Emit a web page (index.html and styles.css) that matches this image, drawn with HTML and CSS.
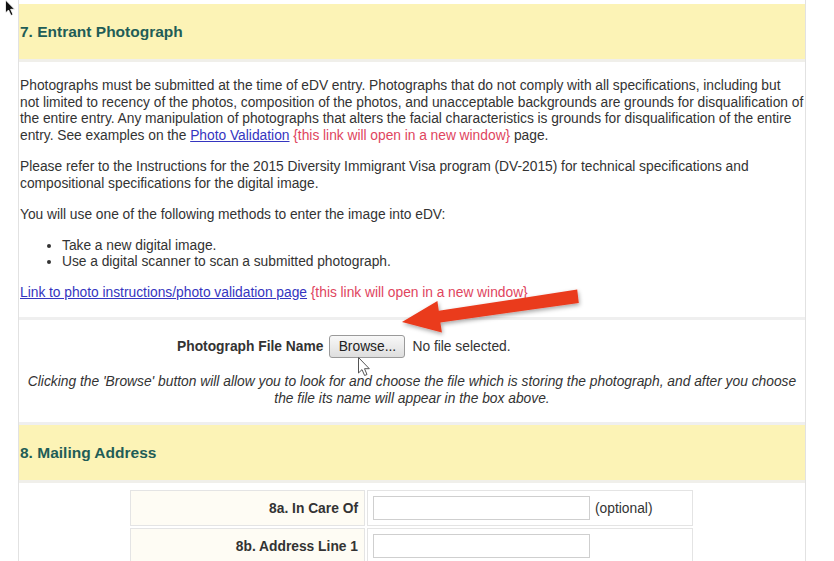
FILE: index.html
```html
<!DOCTYPE html>
<html>
<head>
<meta charset="utf-8">
<link rel="stylesheet" href="styles.css">
</head>
<body>
<div class="page">
  <div class="sec-head">7. Entrant Photograph</div>
  <div class="block intro">
    <p>Photographs must be submitted at the time of eDV entry. Photographs that do not comply with all specifications, including but<br>not limited to recency of the photos, composition of the photos, and unacceptable backgrounds are grounds for disqualification of the entire entry. Any manipulation of photographs that alters the facial characteristics is grounds for disqualification of the entire entry. See examples on the <a href="#">Photo Validation</a> <span class="note">{this link will open in a new window}</span> page.</p>
    <p>Please refer to the Instructions for the 2015 Diversity Immigrant Visa program (DV-2015) for technical specifications and compositional specifications for the digital image.</p>
    <p>You will use one of the following methods to enter the image into eDV:</p>
    <ul>
      <li>Take a new digital image.</li>
      <li>Use a digital scanner to scan a submitted photograph.</li>
    </ul>
    <p><a href="#">Link to photo instructions/photo validation page</a> <span class="note">{this link will open in a new window}</span></p>
  </div>
  <div class="block upload">
    <div class="file-row">
      <span class="file-label">Photograph File Name</span>
      <span class="browse">Browse...</span>
      <span class="nofile">No file selected.</span>
    </div>
    <p class="hint">Clicking the 'Browse' button will allow you to look for and choose the file which is storing the photograph, and after you choose the file its name will appear in the box above.</p>
  </div>
  <div class="sec-head">8. Mailing Address</div>
  <div class="block addr">
    <table class="form">
      <tr>
        <td class="lbl">8a. In Care Of</td>
        <td class="val"><span class="inp"></span><span class="opt">(optional)</span></td>
      </tr>
      <tr>
        <td class="lbl">8b. Address Line 1</td>
        <td class="val"><span class="inp"></span></td>
      </tr>
    </table>
  </div>
</div>
<svg class="overlay" width="834" height="561" viewBox="0 0 834 561">
  <defs>
    <filter id="sh" x="-20%" y="-50%" width="140%" height="200%">
      <feDropShadow dx="1" dy="2" stdDeviation="2" flood-color="#000" flood-opacity="0.35"/>
    </filter>
  </defs>
  <polygon filter="url(#sh)" fill="#ea3a1f" points="577.2,289.5 438.8,310.8 437.4,300.9 402,322 441.9,332.5 440.4,322.6 578.8,302.9"/>
  <path d="M5.5 0 L5.5 13 L8.5 10 L11 15.5 L13 14.6 L10.6 9.3 L14.6 9.3 Z" fill="#111" stroke="#fff" stroke-width="0.8"/>
  <path d="M358.5 357.5 L358.5 373 L362 369.6 L364.6 375.5 L367 374.5 L364.5 368.7 L369.3 368.7 Z" fill="#fff" stroke="#555" stroke-width="1"/>
</svg>
</body>
</html>
```
FILE: styles.css
```css
html, body {
  margin: 0;
  padding: 0;
  background: #fff;
}
body {
  font-family: "Liberation Sans", Arial, sans-serif;
  font-size: 13.8px;
  color: #333;
  width: 834px;
  height: 561px;
  overflow: hidden;
  position: relative;
}
.page {
  margin-left: 18px;
  width: 786px;
  border-left: 1px solid #e2e2e2;
  border-right: 1px solid #e2e2e2;
  padding-top: 4px;
}
.sec-head {
  background: #fcf3b6;
  height: 55px;
  display: flex;
  align-items: center;
  padding-left: 1px;
  font-weight: bold;
  font-size: 15.5px;
  color: #1f5d57;
  border-bottom: 3px solid #f0efea;
}
.block {
  border-bottom: 3px solid #efefef;
}
.intro {
  padding: 16px 0 16px 1px;
  word-spacing: -0.12px;
}
.intro p {
  margin: 0 0 15px;
  line-height: 16.5px;
}
.intro p:last-child {
  margin-bottom: 0;
}
.intro ul {
  margin: -1px 0 14px;
  padding-left: 42px;
  line-height: 16.5px;
}
a {
  color: #3535c0;
  text-decoration: underline;
}
.note {
  color: #e0455e;
}
.upload {
  padding: 14px 0 15px;
  text-align: center;
}
.file-row {
  display: flex;
  align-items: center;
  justify-content: flex-start;
  padding-left: 158px;
  height: 24px;
}
.file-label {
  font-weight: bold;
  margin-right: 6px;
}
.browse {
  display: inline-block;
  width: 74px;
  height: 21px;
  line-height: 21px;
  border: 1px solid #9a9a9a;
  border-radius: 3px;
  background: linear-gradient(#f8f8f8, #dedede);
  text-align: center;
  color: #222;
}
.nofile {
  margin-left: 7px;
}
.hint {
  font-style: italic;
  margin: 16px 0 0;
  line-height: 16.5px;
  padding: 0;
}
.addr {
  border-bottom: none;
  padding-top: 5px;
  height: 120px;
}
.form {
  margin-left: 109px;
  border-collapse: separate;
  border-spacing: 2px;
  width: 567px;
}
.form td {
  border: 1px solid #e4e4e4;
  height: 34px;
  padding: 0;
}
.lbl {
  width: 227px;
  background: #fefcf4;
  text-align: right;
  font-weight: bold;
  padding-right: 6px !important;
}
.val {
  padding-left: 5px !important;
  white-space: nowrap;
}
.inp {
  display: inline-block;
  width: 215px;
  height: 22px;
  border: 1px solid #cfcfcf;
  vertical-align: middle;
  background: #fff;
}
.opt {
  margin-left: 5px;
  vertical-align: middle;
}
.overlay {
  position: absolute;
  top: 0;
  left: 0;
  pointer-events: none;
}
```
